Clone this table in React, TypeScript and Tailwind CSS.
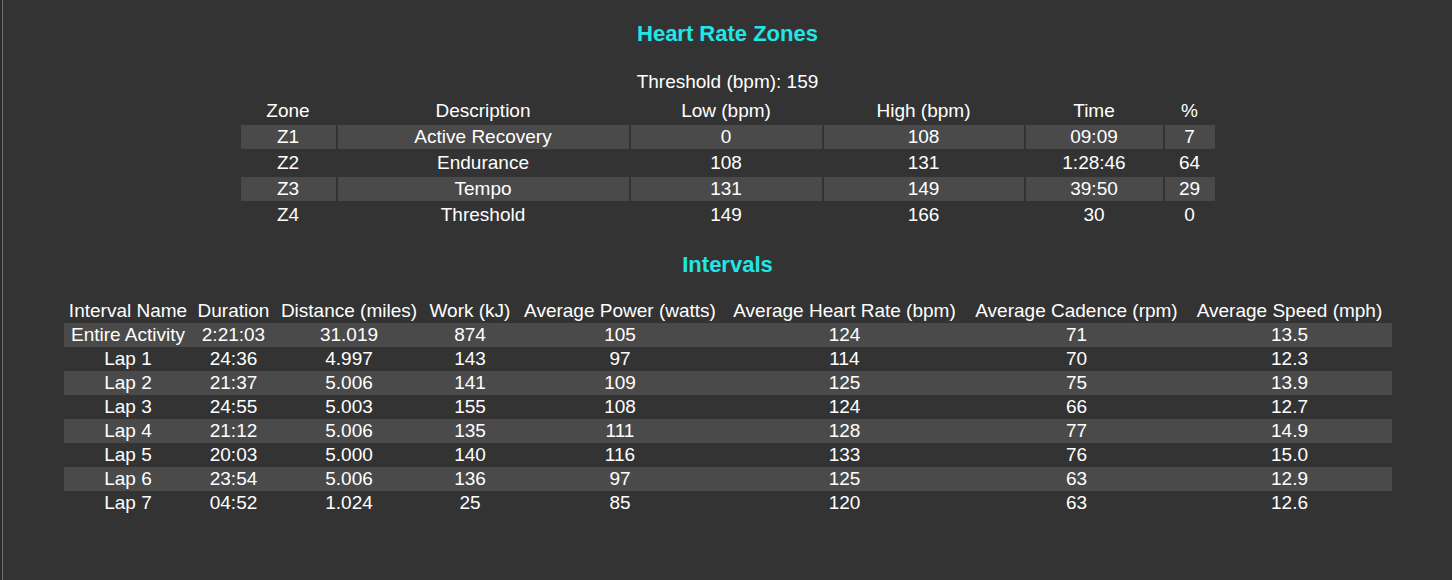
const ZONES = [
  { zone: "Z1", desc: "Active Recovery", low: "0", high: "108", time: "09:09", pct: "7" },
  { zone: "Z2", desc: "Endurance", low: "108", high: "131", time: "1:28:46", pct: "64" },
  { zone: "Z3", desc: "Tempo", low: "131", high: "149", time: "39:50", pct: "29" },
  { zone: "Z4", desc: "Threshold", low: "149", high: "166", time: "30", pct: "0" },
];

const ZONE_COLS = [
  { label: "Zone", w: "w-[95px]" },
  { label: "Description", w: "w-[291px]" },
  { label: "Low (bpm)", w: "w-[191px]" },
  { label: "High (bpm)", w: "w-[200px]" },
  { label: "Time", w: "w-[137px]" },
  { label: "%", w: "w-[50px]" },
];

const INTERVAL_COLS = [
  { label: "Interval Name", w: "w-[129px]" },
  { label: "Duration", w: "w-[82px]" },
  { label: "Distance (miles)", w: "w-[149px]" },
  { label: "Work (kJ)", w: "w-[93px]" },
  { label: "Average Power (watts)", w: "w-[207px]" },
  { label: "Average Heart Rate (bpm)", w: "w-[242px]" },
  { label: "Average Cadence (rpm)", w: "w-[222px]" },
  { label: "Average Speed (mph)", w: "w-[204px]" },
];

const INTERVALS = [
  ["Entire Activity", "2:21:03", "31.019", "874", "105", "124", "71", "13.5"],
  ["Lap 1", "24:36", "4.997", "143", "97", "114", "70", "12.3"],
  ["Lap 2", "21:37", "5.006", "141", "109", "125", "75", "13.9"],
  ["Lap 3", "24:55", "5.003", "155", "108", "124", "66", "12.7"],
  ["Lap 4", "21:12", "5.006", "135", "111", "128", "77", "14.9"],
  ["Lap 5", "20:03", "5.000", "140", "116", "133", "76", "15.0"],
  ["Lap 6", "23:54", "5.006", "136", "97", "125", "63", "12.9"],
  ["Lap 7", "04:52", "1.024", "25", "85", "120", "63", "12.6"],
];

function ZoneTable() {
  return (
    <table className="mx-auto mt-[3px] w-[978px] table-fixed border-separate border-spacing-[2px]">
      <thead>
        <tr>
          {ZONE_COLS.map((c) => (
            <th key={c.label} className={`${c.w} h-[24px] p-0 text-center font-normal leading-[24px]`}>
              {c.label}
            </th>
          ))}
        </tr>
      </thead>
      <tbody>
        {ZONES.map((z, i) => {
          const cell = `h-[24px] p-0 text-center leading-[24px] ${i % 2 === 0 ? "bg-[#4a4a4a]" : ""}`;
          return (
            <tr key={z.zone}>
              <td className={cell}>{z.zone}</td>
              <td className={cell}>{z.desc}</td>
              <td className={cell}>{z.low}</td>
              <td className={cell}>{z.high}</td>
              <td className={cell}>{z.time}</td>
              <td className={cell}>{z.pct}</td>
            </tr>
          );
        })}
      </tbody>
    </table>
  );
}

function IntervalTable() {
  return (
    <table className="mx-auto w-[1328px] table-fixed border-collapse">
      <thead>
        <tr>
          {INTERVAL_COLS.map((c) => (
            <th key={c.label} className={`${c.w} h-[24px] p-0 text-center font-normal leading-[24px] whitespace-nowrap`}>
              {c.label}
            </th>
          ))}
        </tr>
      </thead>
      <tbody>
        {INTERVALS.map((row, i) => (
          <tr key={row[0]} className={i % 2 === 0 ? "bg-[#4a4a4a]" : ""}>
            {row.map((v, j) => (
              <td key={j} className="h-[24px] p-0 text-center leading-[24px]">
                {v}
              </td>
            ))}
          </tr>
        ))}
      </tbody>
    </table>
  );
}

export default function App() {
  return (
    <div className="h-[580px] w-full overflow-hidden border-l-2 border-[#2a2a2a] bg-[#333333]">
      <div className="h-full border-l border-[#6e6e6e] pt-[21px] font-['Liberation_Sans',Arial,sans-serif] text-[19px] text-white">
        <h2 className="text-center text-[22px] font-bold leading-[25px] text-[#22e6e6]">Heart Rate Zones</h2>
        <p className="mt-[24px] text-center leading-[24px]">Threshold (bpm): 159</p>
        <ZoneTable />
        <h2 className="mt-[23px] text-center text-[22px] font-bold leading-[25px] text-[#22e6e6]">Intervals</h2>
        <div className="mt-[22px]">
          <IntervalTable />
        </div>
      </div>
    </div>
  );
}
